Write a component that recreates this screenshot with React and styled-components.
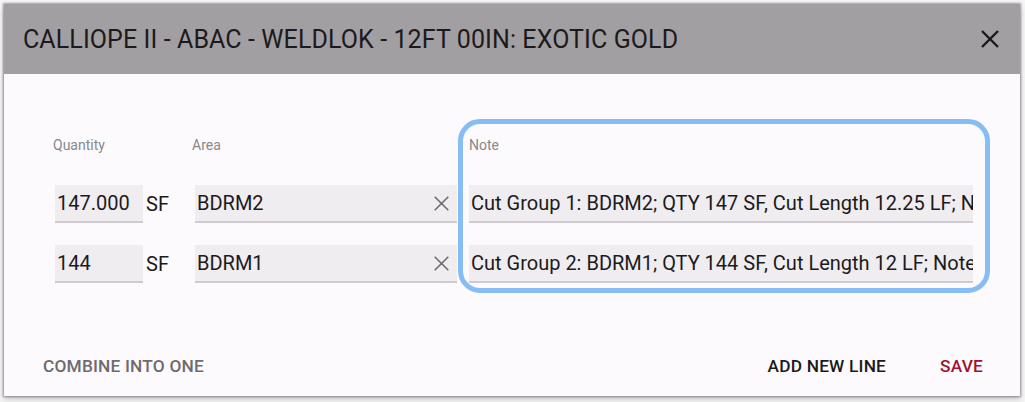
import React from "react";
import styled, { createGlobalStyle } from "styled-components";

const Global = createGlobalStyle`
  html, body { margin: 0; padding: 0; background: #f4f3f4; }
  body { font-family: Roboto, "Noto Sans", "Liberation Sans", sans-serif; }
  * { box-sizing: border-box; }
`;

const Page = styled.div`
  width: 1025px;
  height: 402px;
  padding: 4px 5px 6px 4px;
  background: #f6f5f6;
`;

const Dialog = styled.div`
  width: 1016px;
  height: 392px;
  display: flex;
  flex-direction: column;
  background: #fcfafc;
  box-shadow: 0 0 2px 1px rgba(0,0,0,0.35), 0 3px 6px rgba(0,0,0,0.2);
`;

const Header = styled.div`
  height: 70px;
  flex: none;
  display: flex;
  align-items: center;
  justify-content: space-between;
  padding: 0 18px 0 19px;
  background: #a29fa2;
`;

const Title = styled.h1`
  margin: 0;
  font-size: 25px;
  font-weight: 400;
  color: #1c1a1c;
  letter-spacing: 0.1px;
`;

const CloseButton = styled.button`
  border: 0;
  background: none;
  padding: 0;
  width: 24px;
  height: 24px;
  display: flex;
  align-items: center;
  justify-content: center;
  color: #1c1a1c;
`;

const Body = styled.div`
  flex: 1;
  display: flex;
  flex-direction: column;
  padding: 60px 47px 0 51px;
  position: relative;
`;

const Grid = styled.div`
  display: grid;
  grid-template-columns: 88px 52px 262px 12px 504px;
  grid-auto-rows: auto;
  row-gap: 0;
`;

const Label = styled.div`
  grid-column: ${(p) => p.$col};
  font-size: 14px;
  color: #8a878a;
  margin-left: ${(p) => p.$shift || "-2px"};
  height: 51px;
  padding-top: 3px;
`;

const Field = styled.div`
  grid-column: ${(p) => p.$col};
  height: 38px;
  margin-bottom: 22px;
  display: flex;
  align-items: center;
  background: #efedef;
  border-bottom: 2px solid #cfcacf;
  padding: 0 0 0 2px;
  font-size: 20px;
  color: #1c1a1c;
  overflow: hidden;
  white-space: nowrap;
`;

const FieldText = styled.span`
  flex: 1;
  overflow: hidden;
  white-space: nowrap;
`;

const Unit = styled.div`
  grid-column: 2;
  height: 38px;
  display: flex;
  align-items: center;
  padding-left: 3px;
  font-size: 20px;
  color: #1c1a1c;
`;

const ClearIcon = styled.span`
  width: 20px;
  display: flex;
  align-items: center;
  justify-content: center;
  margin-right: 6px;
  color: #6b686b;
`;

const Highlight = styled.div`
  position: absolute;
  left: 454px;
  top: 45px;
  width: 532px;
  height: 174px;
  border: 5px solid #85bdf4;
  border-radius: 22px;
  pointer-events: none;
`;

const Footer = styled.div`
  margin-top: auto;
  height: 64px;
  display: flex;
  align-items: center;
  padding: 3px 37px 0 39px;
`;

const TextButton = styled.button`
  border: 0;
  background: none;
  padding: 0;
  font-family: inherit;
  font-size: 17.3px;
  font-weight: 500;
  letter-spacing: 0.2px;
  text-transform: uppercase;
  color: ${(p) => p.$color};
  margin-left: ${(p) => p.$ml || "0"};
`;

const Spacer = styled.div`
  flex: 1;
`;

const X = ({ size, stroke }) => (
  <svg width={size} height={size} viewBox="0 0 20 20" fill="none" stroke="currentColor" strokeWidth={stroke}>
    <line x1="2" y1="2" x2="18" y2="18" />
    <line x1="18" y1="2" x2="2" y2="18" />
  </svg>
);

const rows = [
  { qty: "147.000", area: "BDRM2", note: "Cut Group 1: BDRM2; QTY 147 SF, Cut Length 12.25 LF; Note" },
  { qty: "144", area: "BDRM1", note: "Cut Group 2: BDRM1; QTY 144 SF, Cut Length 12 LF; Note" },
];

export default function App() {
  return (
    <>
      <Global />
      <Page>
        <Dialog>
          <Header>
            <Title>CALLIOPE II - ABAC - WELDLOK - 12FT 00IN: EXOTIC GOLD</Title>
            <CloseButton aria-label="close">
              <X size={20} stroke={2.4} />
            </CloseButton>
          </Header>
          <Body>
            <Grid>
              <Label $col={1}>Quantity</Label>
              <Label $col={3} $shift="-3px">Area</Label>
              <Label $col={5} $shift="0px">Note</Label>
              {rows.map((r) => (
                <React.Fragment key={r.area}>
                  <Field $col={1}><FieldText>{r.qty}</FieldText></Field>
                  <Unit>SF</Unit>
                  <Field $col={3}>
                    <FieldText>{r.area}</FieldText>
                    <ClearIcon><X size={17} stroke={1.8} /></ClearIcon>
                  </Field>
                  <Field $col={5}><FieldText>{r.note}</FieldText></Field>
                </React.Fragment>
              ))}
            </Grid>
            <Highlight />
          </Body>
          <Footer>
            <TextButton $color="#6e6b6e">Combine into one</TextButton>
            <Spacer />
            <TextButton $color="#1c1a1c">Add new line</TextButton>
            <TextButton $color="#a3122d" $ml="54px">Save</TextButton>
          </Footer>
        </Dialog>
      </Page>
    </>
  );
}
